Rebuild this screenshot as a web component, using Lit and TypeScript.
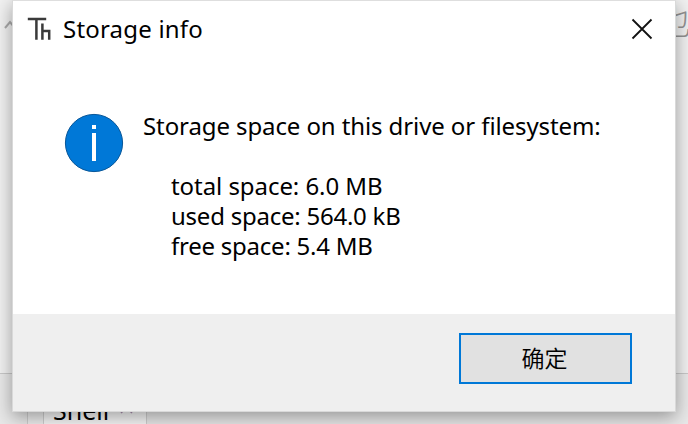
import { LitElement, html, css } from "lit";
import { customElement, property } from "lit/decorators.js";

@customElement("dialog-window")
class DialogWindow extends LitElement {
  @property() heading = "";

  static styles = css`
    :host {
      position: absolute;
      left: 12px;
      top: 0;
      width: 664px;
      height: 412px;
      box-sizing: border-box;
      border: 1px solid #d9d9d9;
      border-top-color: #dedede;
      background: #fff;
      display: flex;
      flex-direction: column;
      box-shadow: 0 5px 17px rgba(0, 0, 0, 0.36);
      color: #000;
      font: 24px/30px "Noto Sans", "Noto Sans CJK SC", sans-serif;
    }
    .bar { display: flex; align-items: center; height: 55px; padding: 0 22px 0 14px; box-sizing: border-box; }
    .logo { width: 26px; height: 26px; margin-right: 10px; }
    .title { flex: 1; letter-spacing: 0.2px; white-space: nowrap; }
    .close { width: 22px; height: 22px; margin-top: 1px; }
    .content { flex: 1; display: flex; padding: 55px 0 0 51px; }
    .info { width: 60px; height: 60px; margin: 2px 19px 0 0; flex: none; }
    .footer { height: 97px; background: #efefef; display: flex; justify-content: flex-end; align-items: flex-start; padding: 19px 43px 0 0; box-sizing: border-box; }
    .ok { width: 173px; height: 51px; padding: 0 2px 3px 0; border: 2px solid #0078d7; background: #e1e1e1; color: #000; font: 23px/44px "Noto Sans CJK SC", sans-serif; font-weight: 350; }
  `;

  render() {
    return html`
      <div class="bar">
        <svg class="logo" viewBox="0 0 26 26" fill="none" stroke="#3a3a3a" stroke-width="2.5">
          <path d="M0.8 3H19.2M9.4 3V23.8" />
          <path d="M15.4 7.5V23.8M15.4 15H22.2V23.8" />
        </svg>
        <span class="title">${this.heading}</span>
        <svg class="close" viewBox="0 0 22 22" stroke="#111" stroke-width="1.8"><path d="M1.5 1.5L20.5 20.5M20.5 1.5L1.5 20.5" /></svg>
      </div>
      <div class="content">
        <svg class="info" viewBox="0 0 60 60">
          <circle cx="30" cy="30" r="28.6" fill="#0078d7" stroke="#075699" />
          <path d="M28 12H32V16H28ZM28 20H32V48H28Z" fill="#fff" />
        </svg>
        <slot></slot>
      </div>
      <div class="footer"><button class="ok">确定</button></div>
    `;
  }
}

@customElement("app-root")
class AppRoot extends LitElement {
  static styles = css`
    :host { display: block; position: relative; width: 688px; height: 424px; overflow: hidden; background: #f1f1f1; font-family: "Noto Sans", "Noto Sans CJK SC", sans-serif; }
    .desk { display: flex; flex-direction: column; height: 424px; }
    .upper { height: 373px; flex: none; display: flex; justify-content: space-between; }
    .lower { flex: 1; display: flex; background: #e8e8e8; border-top: 1px solid #c8c8c8; padding-left: 27px; }
    .gutter { width: 16px; box-sizing: border-box; border-left: 1px solid #cfcfcf; background: #ededed; }
    .tab { width: 104px; box-sizing: border-box; border: 1px solid #cfcfcf; border-bottom: 0; background: #f6f6f6; display: flex; padding: 20px 0 0 9px; font-size: 25px; line-height: 30px; }
    .x { width: 13px; height: 13px; margin: 6px 0 0 11px; }
    .chevron { width: 16px; height: 12px; margin: 18px 0 0 4px; }
    .glyph { width: 32px; height: 40px; font: 35px/40px "Noto Sans CJK SC", sans-serif; font-weight: 300; color: #929292; white-space: nowrap; }
    .lead { white-space: nowrap; letter-spacing: -0.1px; }
    .rows { margin: 30px 0 0 28px; white-space: nowrap; letter-spacing: -0.24px; }
    .total { letter-spacing: -0.06px; }
  `;

  render() {
    return html`
      <div class="desk">
        <div class="upper">
          <svg class="chevron" viewBox="0 0 16 12" fill="none" stroke="#aaa" stroke-width="2"><path d="M1 10L6 4L11 10" /></svg>
          <div class="glyph">也</div>
        </div>
        <div class="lower">
          <div class="gutter"></div>
          <div class="tab">Shell<svg class="x" viewBox="0 0 13 13" stroke="#aa8fae" stroke-width="1.5"><path d="M1 1L12 12M12 1L1 12" /></svg></div>
        </div>
      </div>
      <dialog-window heading="Storage info">
        <div>
          <div class="lead">Storage space on this drive or filesystem:</div>
          <div class="rows">
            <div class="total">total space: 6.0 MB</div>
            <div>used space: 564.0 kB</div>
            <div>free space: 5.4 MB</div>
          </div>
        </div>
      </dialog-window>
    `;
  }
}
